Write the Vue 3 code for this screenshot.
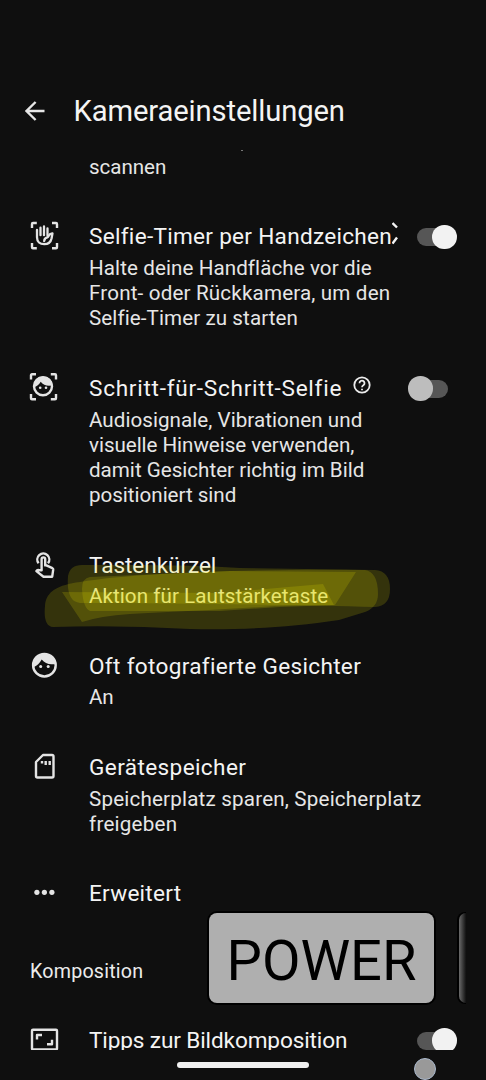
<script setup>
const rows = [
  {
    icon: 'hand',
    title: ['Selfie-Timer per Handzeichen', 302],
    lines: [['Halte deine Handfläche vor die', 282], ['Front- oder Rückkamera, um den', 301], ['Selfie-Timer zu starten', 208]],
    toggle: 'on',
    help: 'clipped',
  },
  {
    icon: 'selfie',
    title: ['Schritt-für-Schritt-Selfie', 252],
    lines: [['Audiosignale, Vibrationen und', 273], ['visuelle Hinweise verwenden,', 265], ['damit Gesichter richtig im Bild', 275], ['positioniert sind', 147]],
    toggle: 'off',
    help: 'full',
  },
  { icon: 'touch', title: ['Tastenkürzel', 127], lines: [['Aktion für Lautstärketaste', 239]], marked: true },
  { icon: 'face', title: ['Oft fotografierte Gesichter', 271], lines: [['An', 24]] },
  { icon: 'sd', title: ['Gerätespeicher', 157], lines: [['Speicherplatz sparen, Speicherplatz', 332], ['freigeben', 88]] },
  { icon: 'more', title: ['Erweitert', 92], lines: [] },
]

// Spreads the letters so that a line takes the given width.
const vFit = {
  mounted(el, { value }) {
    const apply = () => {
      el.style.letterSpacing = '0px'
      const natural = el.getBoundingClientRect().width
      el.style.letterSpacing = `${(value + 0.3 - natural) / el.textContent.length}px`
    }
    apply()
    document.fonts.ready.then(apply)
  },
}
</script>

<template>
  <div class="screen">
    <header class="bar">
      <svg class="back" viewBox="0 0 20 20"><path d="M19.500 10H1.800M10.600 1L1.500 10l9.100 9" /></svg>
      <h1><span v-fit="271">Kameraeinstellungen</span></h1>
    </header>

    <main class="list">
      <i class="speck"></i>
      <div class="prev"><span v-fit="77">scannen</span></div>

      <section v-for="row in rows" :key="row.icon" class="row">
        <svg class="icon" viewBox="0 0 30 30">
          <g v-if="row.icon === 'hand'">
            <path class="s" d="M3 6V2Q3 1 4 1H7.800M23 1H27Q28 1 28 2V6M28 21v4.300q0 1-1 1H23M7.800 26.300H4q-1 0-1-1V21" />
            <path class="s round" d="M8 8V15.200C8 19.600 11 22.200 15.200 22.200c3.900 0 6.600-2.200 7.400-6L23.500 11.300 20.700 12.400 18.800 15.200C16.300 15.700 15.300 17 15.200 19" />
            <path class="s round" d="M11.500 5.700V13.200M15 4.500V13.200M18.500 6.400V13.600" />
          </g>
          <g v-else-if="row.icon === 'selfie'">
            <path class="s" d="M2 5.500V1.300Q2 .3 3 .3H7M21.800 .3H26Q27 .3 27 1.300V5.500M27 20v4.300q0 1-1 1H21.800M7 25.300H3q-1 0-1-1V20" />
            <circle class="s" cx="14" cy="12.200" r="9" />
            <path class="f" d="M4.600 13.500C8 12.400 10 10.600 11.700 7.800c2.700 3.400 6.600 4.600 12 3.500C23 6 19 2.600 14 2.600S4.800 6.500 4.600 13.500z" />
            <circle class="f" cx="11.200" cy="13.700" r="1.300" /><circle class="f" cx="17" cy="13.700" r="1.300" />
          </g>
          <g v-else-if="row.icon === 'touch'">
            <path class="s" d="M9.600 12.200A6 6 0 1 1 19 12.200M12.600 19.300V8.200a1.800 1.800 0 0 1 3.600 0v6.200h1.200l6 2.800q.9.500.8 1.500l-1 7H14.500L7.400 20.100l.9-.9q.5-.4 1.200-.2z" />
          </g>
          <g v-else-if="row.icon === 'face'">
            <circle class="s" cx="15.400" cy="13.200" r="11.300" />
            <path class="f" d="M4.300 15.300C8 14 10.800 11 12.700 7.500c3.300 4.200 7.700 5.600 14 4.400C26 5.400 21.500 1.400 15.400 1.400S4 6.500 4.300 15.300z" />
            <circle class="f" cx="11.700" cy="14.500" r="1.500" /><circle class="f" cx="19.200" cy="14.500" r="1.500" />
          </g>
          <g v-else-if="row.icon === 'sd'">
            <path class="s" d="M14 2H23q1.500 0 1.500 1.500V23q0 1.500-1.500 1.500H8.500Q7 24.500 7 23V9z" />
            <path class="s" d="M13 8v2.400M16.700 8v4M20.700 8v4" />
          </g>
          <g v-else>
            <circle class="f" cx="7.900" cy="13.300" r="2.600" /><circle class="f" cx="15.400" cy="13.300" r="2.600" /><circle class="f" cx="22.900" cy="13.300" r="2.600" />
          </g>
        </svg>
        <div class="body">
          <h2>
            <span v-fit="row.title[1]">{{ row.title[0] }}</span>
            <svg v-if="row.help === 'full'" class="help" viewBox="0 0 18 18">
              <circle cx="9" cy="9" r="7.700" /><path d="M6.500 7.200a2.500 2.500 0 1 1 4.100 1.900Q9 10.200 9 11.300M9 12.700v1.500" />
            </svg>
            <svg v-if="row.help === 'clipped'" class="edge" viewBox="0 0 6 24"><path d="M.5 1L5 5.500M.5 21.500L5 15.500" /></svg>
          </h2>
          <p v-for="line in row.lines" :key="line[0]"><span v-fit="line[1]">{{ line[0] }}</span></p>
        </div>
        <span v-if="row.toggle" class="toggle" :class="row.toggle"></span>
        <svg v-if="row.marked" class="marker" viewBox="0 0 350 70">
          <path d="M5 46C6 31 18 25 40 22C100 12 220 9 325 10Q338 12 338 34Q338 47 325 52L299 60C250 67 210 70 150 69Q80 65 13 67Q3 66 5 46z" />
          <path d="M28 16Q30 5 42 5C120 5 150 5 200 8L335 10Q350 11 350 29Q350 46 335 47C260 45 140 43 40 43Q26 42 28 16z" />
          <path d="M42 29Q42 18 50 17L190 11L316 12L295 45L240 47L180 51L50 51Q43 48 42 29z" />
          <path d="M22 32L180 33L283 24L294 45L235 46C180 50 130 52 90 54Q60 56 42 62z" />
        </svg>
      </section>

      <div class="group"><span v-fit="113">Komposition</span></div>

      <section class="row">
        <svg class="icon" viewBox="0 0 30 30">
          <path class="s" d="M4 3.700H27q1 0 1 1V22.400q0 1-1 1H4q-1 0-1-1V4.700Q3 3.700 4 3.700z" />
          <path class="s" d="M8 13.500V9H13M18 18.300h5V13.800" />
        </svg>
        <div class="body"><h2><span v-fit="258">Tipps zur Bildkomposition</span></h2></div>
        <span class="toggle on"></span>
      </section>
    </main>

    <div class="key power">POWER</div>
    <div class="key next"></div>
    <div class="home"></div>
    <div class="touch-dot"></div>
  </div>
</template>

<style>
html,
body {
  margin: 0;
  background: #0f0f0f;
}
</style>

<style scoped>
.screen {
  position: relative;
  width: 486px;
  height: 1080px;
  overflow: hidden;
  box-sizing: border-box;
  padding-top: 72px;
  background: #0f0f0f;
  color: #f4f4f4;
  font-family: Roboto, "Liberation Sans", sans-serif;
  white-space: nowrap;
}
.bar {
  display: flex;
  align-items: center;
  height: 78px;
  padding-left: 25px;
}
.back {
  width: 20px;
  height: 20px;
  margin-right: 28.500px;
  fill: none;
  stroke: #e6e6e6;
  stroke-width: 2.400;
}
h1,
h2,
p {
  margin: 0;
  font-weight: 400;
}
h1 {
  font-size: 29.200px;
  line-height: 40px;
}
.list {
  position: relative;
  height: 896px;
  padding-top: 4px;
  overflow: hidden;
}
.speck {
  position: absolute;
  left: 241px;
  top: 0;
  width: 2px;
  height: 1px;
  background: #777;
}
.prev,
p {
  font-size: 20.600px;
  line-height: 25.200px;
  height: 25.200px;
  color: #e6e6e6;
}
.prev span,
p span {
  position: relative;
  top: 0.800px;
}
.prev {
  padding-left: 89px;
  margin-bottom: 43px;
}
.row {
  position: relative;
  display: flex;
  padding: 0 29px;
  margin-bottom: 43px;
}
.row:has(+ .group) {
  margin-bottom: 0;
}
.icon {
  flex: none;
  width: 30px;
  height: 30px;
  margin-right: 30px;
  overflow: visible;
}
.s {
  fill: none;
  stroke: #e4e4e4;
  stroke-width: 2.400;
  stroke-linejoin: round;
}
.round {
  stroke-width: 2.300;
  stroke-linecap: round;
}
.f {
  fill: #e4e4e4;
}
.body {
  flex: 1;
  min-width: 0;
}
h2 {
  position: relative;
  font-size: 22.600px;
  line-height: 30px;
  height: 30px;
}
h2 + p {
  margin-top: 3px;
}
.body span {
  display: inline-block;
}
.help {
  position: absolute;
  left: 264px;
  top: 2px;
  width: 18px;
  height: 18px;
  fill: none;
  stroke: #ececec;
  stroke-width: 1.800;
}
.edge {
  position: absolute;
  left: 302.500px;
  top: 0;
  width: 6px;
  height: 24px;
  fill: none;
  stroke: #f4f4f4;
  stroke-width: 2.400;
}
.toggle {
  position: relative;
  flex: none;
  width: 49px;
  height: 30px;
}
.toggle::before,
.toggle::after {
  content: "";
  position: absolute;
}
.toggle::before {
  top: 6px;
  width: 34px;
  height: 18px;
  border-radius: 9px;
  background: #565656;
}
.toggle::after {
  top: 2.700px;
  width: 24.500px;
  height: 24.500px;
  border-radius: 50%;
}
.on::before {
  left: 9px;
}
.on::after {
  right: 0.300px;
  background: #f2f2f2;
}
.off::before {
  left: 6px;
}
.off::after {
  left: 0;
  background: #bdbdbd;
}
.marker {
  position: absolute;
  left: 40px;
  top: 9.700px;
  width: 350px;
  height: 70px;
  fill: #ece800;
  fill-opacity: 0.17;
}
.group {
  height: 25px;
  margin: 49.500px 0 42px;
  padding-left: 30px;
  font-size: 19.700px;
  line-height: 25px;
  color: #ececec;
}
.key {
  position: absolute;
  top: 913px;
  height: 90px;
  border-radius: 8px;
  box-shadow: 0 0 0 2px #000;
}
.power {
  left: 209px;
  width: 225px;
  background: #afafaf;
  color: #000;
  font-size: 56px;
  line-height: 96px;
  text-align: center;
}
.next {
  left: 458.500px;
  width: 7.500px;
  border-radius: 8px 0 0 8px;
  background: linear-gradient(90deg, #6b6b6b, #111);
  box-shadow: -1px 0 0 1px #000;
}
.home {
  position: absolute;
  left: 177px;
  top: 1062px;
  width: 132px;
  height: 6px;
  border-radius: 3px;
  background: #f0f0f0;
}
.touch-dot {
  position: absolute;
  left: 414px;
  top: 1058px;
  width: 20px;
  height: 20px;
  border: 1px solid #a9b8cc;
  border-radius: 50%;
  background: #999;
}
</style>
